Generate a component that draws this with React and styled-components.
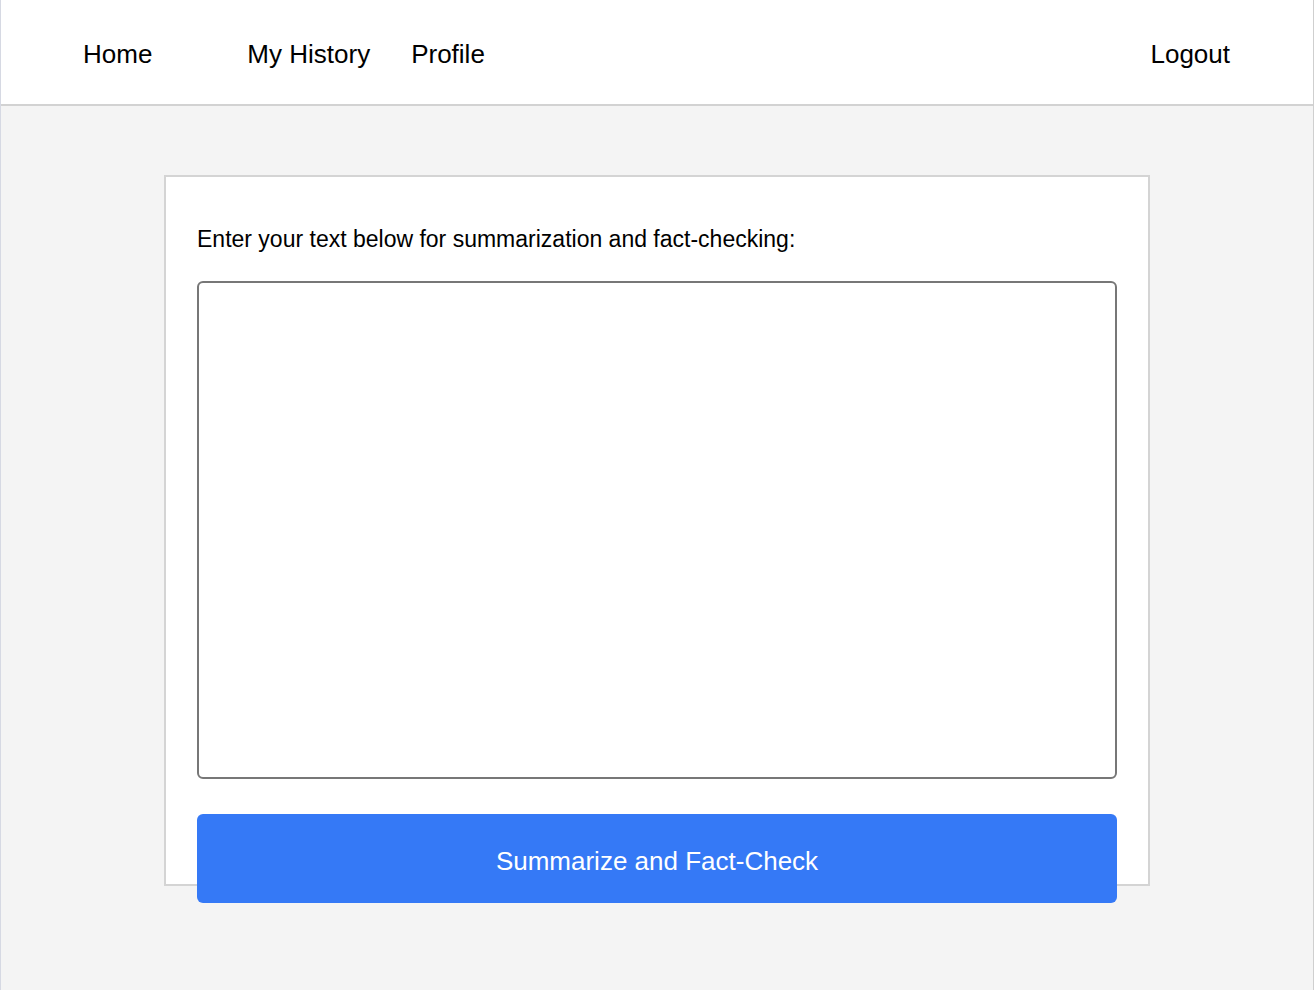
import styled, { createGlobalStyle } from "styled-components";

const GlobalStyle = createGlobalStyle`
    html, body {
        margin: 0;
        padding: 0;
        background: #f4f4f4;
    }
    * {
        box-sizing: border-box;
    }
`;

export default function App(){
    return(
        <Page>
            <GlobalStyle />
            <Header>
                <NavLink href="#" gap={95}>Home</NavLink>
                <NavLink href="#" gap={41}>My History</NavLink>
                <NavLink href="#">Profile</NavLink>
                <NavLink href="#" push>Logout</NavLink>
            </Header>
            <Main>
                <Card>
                    <Label htmlFor="input-text">Enter your text below for summarization and fact-checking:</Label>
                    <TextArea id="input-text" />
                    <SubmitButton type="button">Summarize and Fact-Check</SubmitButton>
                </Card>
            </Main>
        </Page>);
}

const Page = styled.div`
    min-height: 990px;
    background: #f4f4f4;
    border-left: 1px solid #d6d9e3;
    border-right: 1px solid #cfcfcf;
    font-family: "Liberation Sans", Arial, sans-serif;
    color: #000;
`;

const Header = styled.nav`
    height: 106px;
    background: #fff;
    border-bottom: 2px solid #d2d2d2;
    display: flex;
    align-items: center;
    padding: 4px 83px 0 82px;
`;

const NavLink = styled.a`
    font-size: 26px;
    color: #000;
    text-decoration: none;
    margin-right: ${props => props.gap || 0}px;
    margin-left: ${props => props.push ? "auto" : "0"};
`;

const Main = styled.main`
    display: flex;
    justify-content: center;
    padding-top: 69px;
`;

const Card = styled.section`
    width: 986px;
    height: 711px;
    background: #fff;
    border: 2px solid #d4d4d4;
    padding: 49px 31px 0 31px;
    display: flex;
    flex-direction: column;
`;

const Label = styled.label`
    font-size: 23px;
    line-height: 26px;
    margin-bottom: 29px;
`;

const TextArea = styled.textarea`
    width: 920px;
    height: 498px;
    border: 2px solid #777;
    border-radius: 6px;
    resize: none;
    background: #fff;
    font-family: inherit;
    font-size: 16px;
    flex-shrink: 0;
`;

const SubmitButton = styled.button`
    margin-top: 35px;
    width: 920px;
    height: 89px;
    flex-shrink: 0;
    background: #3579f6;
    color: #fff;
    border: none;
    border-radius: 6px;
    padding: 6px 0 0 0;
    font-family: inherit;
    font-size: 26px;
    cursor: pointer;
`;
